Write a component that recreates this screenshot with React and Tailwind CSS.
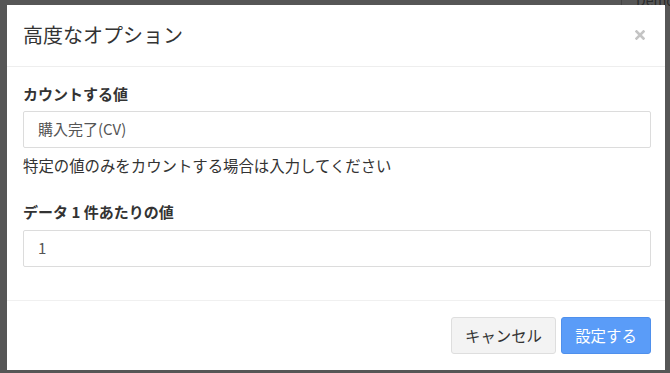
export default function App() {
  const font = { fontFamily: '"Noto Sans CJK JP", "Noto Sans", sans-serif' };
  return (
    <div className="w-[670px] h-[373px] bg-[#565656] pt-[5px] pl-[7px] overflow-hidden relative" style={font}>
      <div className="absolute left-[621px] top-0 w-px h-[5px] bg-[#444]"></div>
      <div className="absolute left-[636px] top-[-10px] text-[14px] text-[#2a2a2a]">Demo</div>
      <div className="w-[658px] h-[365px] bg-white flex flex-col relative">
        <div className="h-[62px] border-b border-[#eeeeee] flex items-center justify-between pl-[16px] pr-[20px]">
          <div className="text-[20px] text-[#333] leading-[26px] mt-[-1px]">高度なオプション</div>
          <svg width="10" height="10" viewBox="0 0 10 10" className="mt-[-2px]">
            <path d="M1.5 1.5 L8.5 8.5 M8.5 1.5 L1.5 8.5" stroke="#c4c4c4" strokeWidth="2.6" strokeLinecap="square" />
          </svg>
        </div>
        <div className="pl-[16px] pr-[14px] pt-[17px] pb-[33px] flex flex-col">
          <div className="text-[15px] font-bold text-[#333] leading-[20px]">カウントする値</div>
          <div className="mt-[7px] h-[37px] border border-[#dcdcdc] rounded-[2px] flex items-center pl-[14px] text-[15px] text-[#555]">購入完了(CV)</div>
          <div className="mt-[7px] text-[15.4px] text-[#333] leading-[20px]">特定の値のみをカウントする場合は入力してください</div>
          <div className="mt-[27px] text-[15px] font-bold text-[#333] leading-[20px]">データ 1 件あたりの値</div>
          <div className="mt-[8px] h-[37px] border border-[#dcdcdc] rounded-[2px] flex items-center pl-[14px] text-[15px] text-[#555]">1</div>
        </div>
        <div className="border-t border-[#f0f0f0] flex justify-end items-start gap-[5px] pl-[16px] pr-[14px] pt-[16px]">
          <button className="h-[37px] w-[105px] rounded-[3px] bg-[#f3f3f3] border border-[#dedede] text-[15.4px] text-[#333]">キャンセル</button>
          <button className="h-[37px] w-[90px] rounded-[3px] bg-[#5a9cf8] border border-[#4f90ec] text-[15.4px] text-white">設定する</button>
        </div>
      </div>
    </div>
  );
}
